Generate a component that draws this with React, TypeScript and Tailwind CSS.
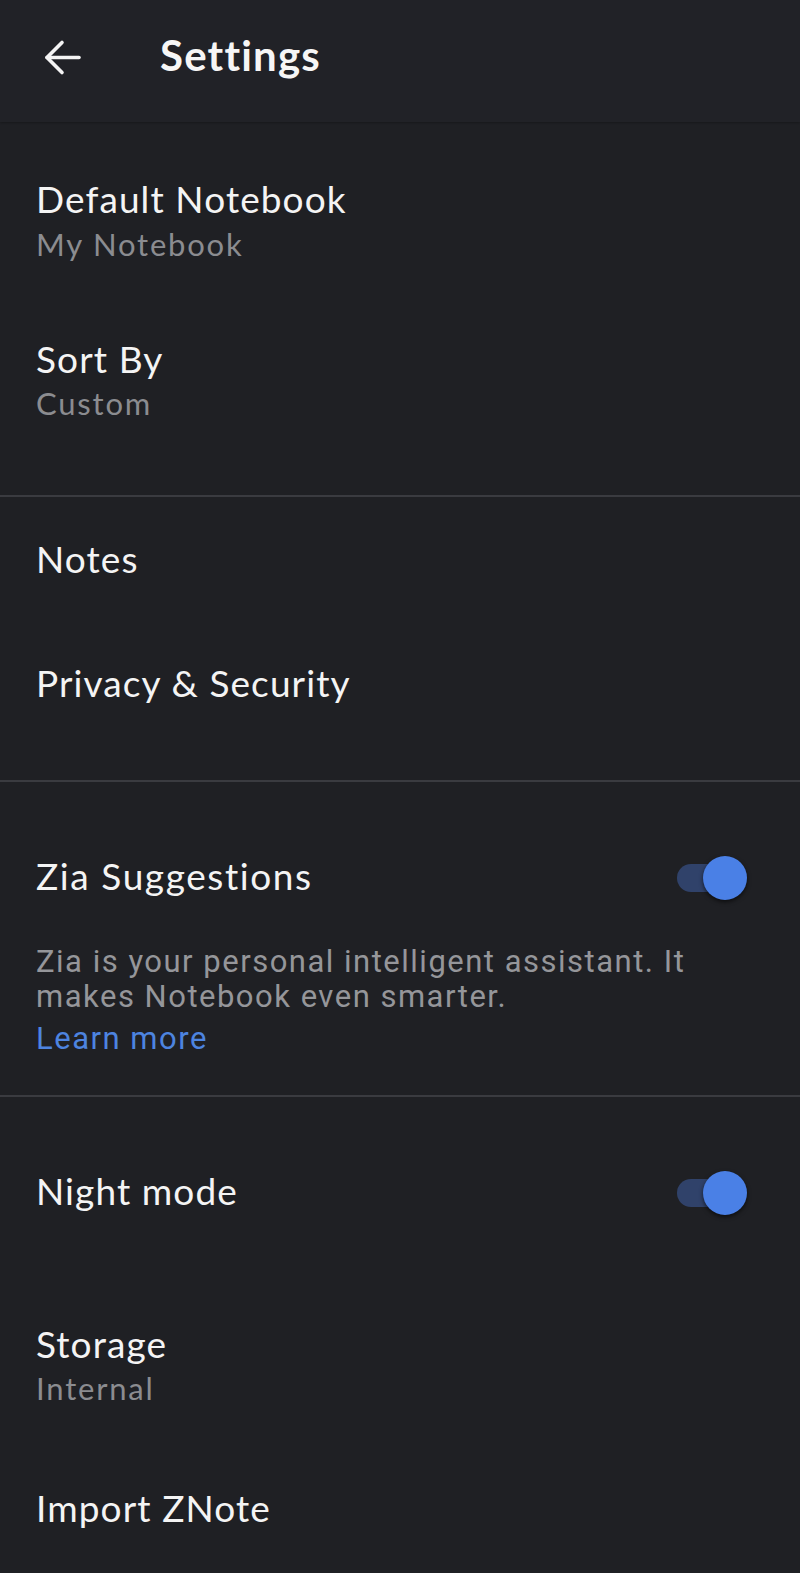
import React from "react";

const Toggle = ({ className = "mt-[3px] -mb-[5px]" }: { className?: string }) => (
  <div className={`relative w-[72px] h-[46px] shrink-0 ${className}`}>
    <div className="absolute left-0 top-[9px] h-[28px] w-[62px] rounded-full bg-[#30426a]" />
    <div className="absolute right-[2px] top-[1px] h-[44px] w-[44px] rounded-full bg-[#4a80e6] shadow-[0_2px_4px_rgba(0,0,0,0.6)]" />
  </div>
);

const Title = ({ children, className = "" }: { children: React.ReactNode; className?: string }) => (
  <div className={`text-[37px] leading-[44px] tracking-[1.1px] text-[#f4f4f4] font-['Lato',sans-serif] ${className}`}>{children}</div>
);

const Sub = ({ children, className = "" }: { children: React.ReactNode; className?: string }) => (
  <div className={`text-[31px] leading-[38px] tracking-[1.8px] text-[#8b8c90] font-['Lato',sans-serif] ${className}`}>{children}</div>
);

const Divider = () => <div className="h-[2px] bg-[#3a3b40]" />;

export default function App() {
  return (
    <div className="w-[800px] h-[1573px] bg-[#1f2024] overflow-hidden font-['Lato',sans-serif]">
      <header className="h-[122px] bg-[#212227] shadow-[0_1px_2px_rgba(0,0,0,0.25)] flex items-start">
        <svg className="ml-[44px] mt-[39px]" width="37" height="37" viewBox="0 0 37 37" fill="none" stroke="#f4f4f4" strokeWidth="3.6" strokeLinecap="round" strokeLinejoin="round">
          <path d="M35 18.5H3" />
          <path d="M18 3.5L3 18.5L18 33.5" />
        </svg>
        <div className="ml-[79px] mt-[29px] text-[42px] leading-[52px] font-bold tracking-[1.2px] text-[#f6f6f6]">Settings</div>
      </header>

      <section className="px-[36px]">
        <Title className="mt-[55px]">Default Notebook</Title>
        <Sub className="mt-[4px]">My Notebook</Sub>
        <Title className="mt-[74px]">Sort By</Title>
        <Sub className="mt-[3px]">Custom</Sub>
        <div className="h-[73px]" />
      </section>
      <Divider />

      <section className="px-[36px]">
        <Title className="mt-[40px]">Notes</Title>
        <Title className="mt-[80px]">Privacy &amp; Security</Title>
        <div className="h-[75px]" />
      </section>
      <Divider />

      <section className="pl-[36px] pr-[51px]">
        <div className="mt-[70px] flex items-start justify-between">
          <Title className="mt-[2px] tracking-[1.6px]">Zia Suggestions</Title>
          <Toggle />
        </div>
        <p className="mt-[46px] w-[690px] text-[31px] leading-[35px] tracking-[1.5px] text-[#95969a] font-['Roboto',sans-serif]">
          Zia is your personal intelligent assistant. It makes Notebook even smarter.
        </p>
        <div className="mt-[7px] text-[31px] leading-[35px] tracking-[1.5px] text-[#4d84e0] font-['Roboto',sans-serif]">Learn more</div>
        <div className="h-[39px]" />
      </section>
      <Divider />

      <section className="pl-[36px] pr-[51px]">
        <div className="mt-[72px] flex items-start justify-between">
          <Title>Night mode</Title>
          <Toggle className="mt-[1px] -mb-[3px]" />
        </div>
        <Title className="mt-[109px]">Storage</Title>
        <Sub className="mt-[3px]">Internal</Sub>
        <Title className="mt-[79px]">Import ZNote</Title>
      </section>
    </div>
  );
}
